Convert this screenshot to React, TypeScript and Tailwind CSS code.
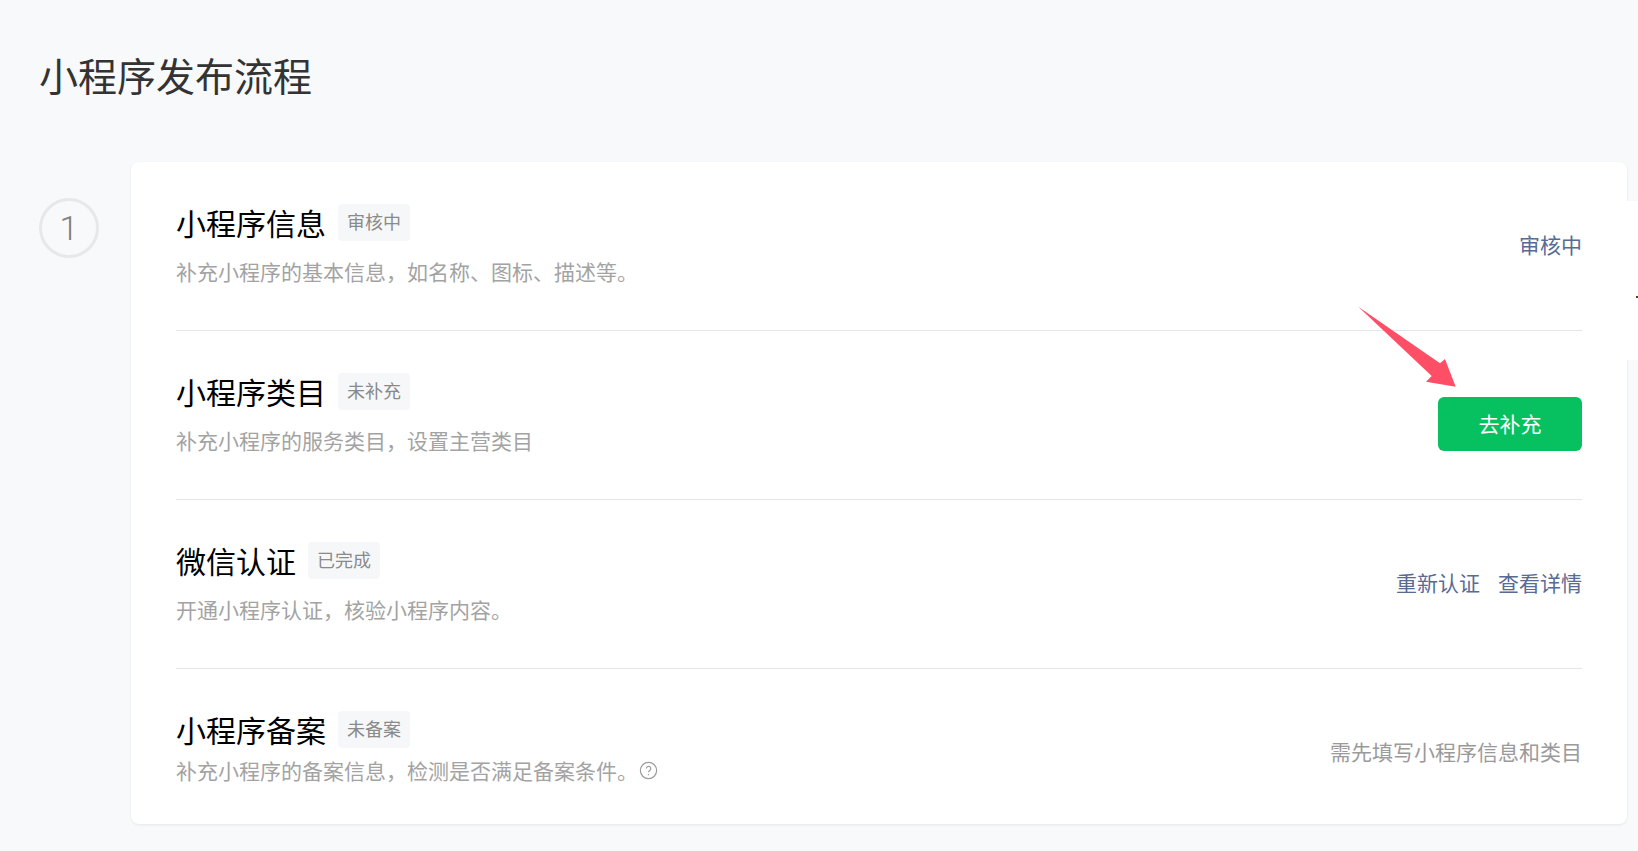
import { ReactNode } from "react";

type Step = {
  title: string;
  badge: string;
  desc: ReactNode;
  action: ReactNode;
  last?: boolean;
};

const steps: Step[] = [
  {
    title: "小程序信息",
    badge: "审核中",
    desc: "补充小程序的基本信息，如名称、图标、描述等。",
    action: <span className="mt-[-2px] block text-[#576b95]">审核中</span>,
  },
  {
    title: "小程序类目",
    badge: "未补充",
    desc: "补充小程序的服务类目，设置主营类目",
    action: (
      <button className="mt-[18px] h-[54px] w-[144px] rounded-md bg-[#07c160] text-white">去补充</button>
    ),
  },
  {
    title: "微信认证",
    badge: "已完成",
    desc: "开通小程序认证，核验小程序内容。",
    action: (
      <div className="mt-[-2px] flex gap-[18px] text-[#576b95]">
        <span>重新认证</span>
        <span>查看详情</span>
      </div>
    ),
  },
  {
    title: "小程序备案",
    badge: "未备案",
    desc: (
      <span className="flex items-center">
        补充小程序的备案信息，检测是否满足备案条件。
        <svg viewBox="0 0 18 18" className="ml-[1px] h-[19px] w-[19px]" fill="none" stroke="#9a9a9a">
          <circle cx="9" cy="9" r="7.7" strokeWidth="1.1" />
          <path d="M6.9 7.2a2.1 2.1 0 1 1 3.3 1.7c-.8.5-1.2.9-1.2 1.8" strokeWidth="1.1" />
          <path d="M9 12.4v1.1" strokeWidth="1.2" />
        </svg>
      </span>
    ),
    action: <span className="mt-[10px] block text-[#9a9a9a]">需先填写小程序信息和类目</span>,
    last: true,
  },
];

function StepRow({ step }: { step: Step }) {
  return (
    <div
      className={
        step.last
          ? "flex h-[155px] items-center justify-between"
          : "flex h-[169px] items-center justify-between border-b border-[#e5e5e5]"
      }
    >
      <div className="self-start pt-[41px]">
        <div className="flex items-center gap-3">
          <h3 className="text-[30px] leading-[38px] font-normal text-black">{step.title}</h3>
          <span className="flex h-[37px] items-center rounded bg-[#f6f7f9] px-[9px] pb-[2px] text-[18px] text-[#8a8a8a]">
            {step.badge}
          </span>
        </div>
        <p className={(step.last ? "mt-[7px]" : "mt-[15px]") + " text-[21px] leading-[30px] text-[#a3a3a3]"}>
          {step.desc}
        </p>
      </div>
      <div className="text-[21px]">{step.action}</div>
    </div>
  );
}

export default function App() {
  return (
    <div
      className="relative h-screen overflow-hidden bg-[#f8f9fb] pr-[11px] pl-[39px]"
      style={{ fontFamily: '"Noto Sans CJK SC", "Liberation Sans", sans-serif' }}
    >
      <h1 className="h-[162px] pt-[45px] text-[39px] leading-[58px] font-normal text-[#333]">
        小程序发布流程
      </h1>

      <div className="flex items-start">
        <div className="mt-9 flex h-[60px] w-[60px] shrink-0 items-center justify-center rounded-full border-[3px] border-[#e6e8ea] font-['Roboto',sans-serif] text-[34px] font-light text-[#808080]">
          1
        </div>
        <div className="ml-8 flex-1 rounded-lg bg-white pr-[45px] pl-[45px] shadow-[0_1px_3px_rgba(0,0,0,0.08)]">
          {steps.map((step) => (
            <StepRow key={step.title} step={step} />
          ))}
        </div>
      </div>

      {/* annotation arrow drawn on top of the screenshot */}
      <svg className="absolute top-[300px] left-[1350px]" width="115" height="95" viewBox="0 0 115 95">
        <polygon points="8.3,6.7 90,63.3 95,59 105.7,86.7 76,81.7 81.7,76" fill="#ff4f66" />
      </svg>

      {/* collapsed side tab at the window edge */}
      <div className="absolute top-[201px] right-0 h-[159px] w-[11px] bg-white">
        <div className="absolute top-[95px] right-0 h-[2px] w-[2px] bg-[#5a3a22]" />
      </div>
    </div>
  );
}
